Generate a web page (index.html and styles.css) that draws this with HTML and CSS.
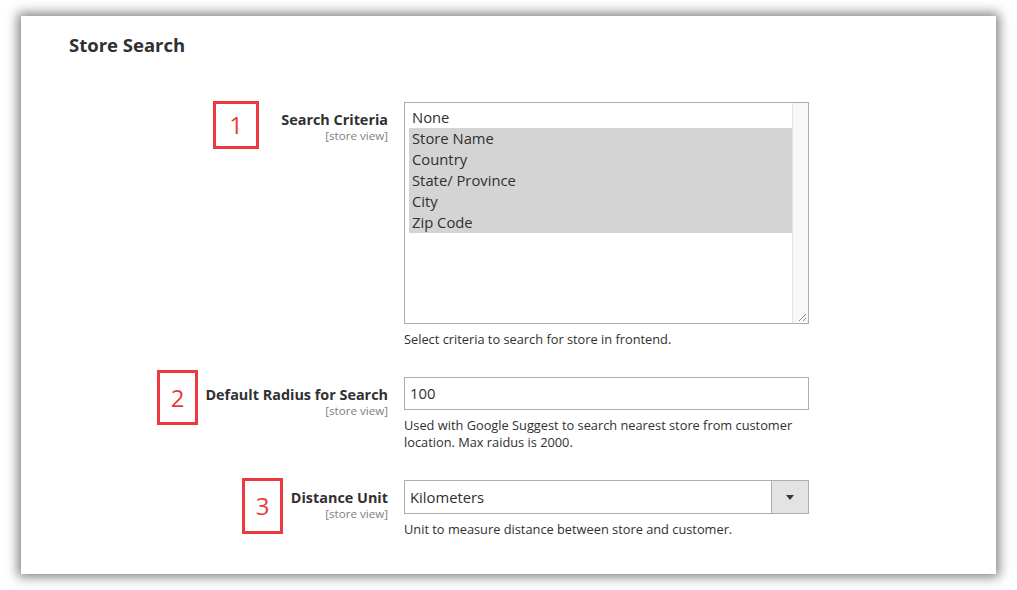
FILE: index.html
```html
<!DOCTYPE html>
<html lang="en">
<head>
<meta charset="utf-8">
<title>Store Search</title>
<link rel="stylesheet" href="styles.css">
</head>
<body>
<div class="card">
  <h2 class="title">Store Search</h2>

  <div class="row">
    <div class="label-cell">
      <span class="marker marker-1">1</span>
      <div class="label">Search Criteria</div>
      <div class="scope">[store view]</div>
    </div>
    <div class="control-cell">
      <div class="multiselect">
        <div class="options">
          <div class="option">None</div>
          <div class="option selected">Store Name</div>
          <div class="option selected">Country</div>
          <div class="option selected">State/ Province</div>
          <div class="option selected">City</div>
          <div class="option selected">Zip Code</div>
        </div>
        <div class="track"></div>
        <svg class="grip" width="10" height="10" viewBox="0 0 10 10">
          <path d="M2 9 L9 2 M6 9 L9 6" stroke="#8a8a8a" stroke-width="1" fill="none"/>
        </svg>
      </div>
      <div class="note">Select criteria to search for store in frontend.</div>
    </div>
  </div>

  <div class="row">
    <div class="label-cell">
      <span class="marker marker-2">2</span>
      <div class="label">Default Radius for Search</div>
      <div class="scope">[store view]</div>
    </div>
    <div class="control-cell">
      <div class="input">100</div>
      <div class="note">Used with Google Suggest to search nearest store from customer location. Max raidus is 2000.</div>
    </div>
  </div>

  <div class="row">
    <div class="label-cell">
      <span class="marker marker-3">3</span>
      <div class="label">Distance Unit</div>
      <div class="scope">[store view]</div>
    </div>
    <div class="control-cell">
      <div class="select">
        <span class="select-value">Kilometers</span>
        <span class="select-btn"><span class="caret"></span></span>
      </div>
      <div class="note">Unit to measure distance between store and customer.</div>
    </div>
  </div>
</div>
</body>
</html>
```

FILE: styles.css
```css
* { box-sizing: border-box; }

html, body {
  margin: 0;
  padding: 0;
  background: #ffffff;
}

body {
  font-family: "Open Sans", "Liberation Sans", sans-serif;
  color: #303030;
  padding: 16px 21px 16px 21px;
}

.card {
  width: 975px;
  height: 558px;
  background: #ffffff;
  box-shadow: 0 0 11px 3px rgba(0, 0, 0, 0.5);
  padding-top: 17px;
}

.title {
  margin: 0;
  padding-left: 48px;
  font-size: 18.5px;
  line-height: 24px;
  font-weight: 700;
  color: #303030;
}

.row {
  position: relative;
  display: grid;
  grid-template-columns: 367px 405px;
  column-gap: 16px;
  margin-top: 29px;
}

.row:first-of-type { margin-top: 45px; }

.label-cell {
  text-align: right;
  padding-top: 8px;
}

.label {
  font-size: 14.4px;
  line-height: 19px;
  font-weight: 700;
  color: #303030;
}

.scope {
  font-size: 11.6px;
  line-height: 14px;
  color: #808080;
}

.marker {
  position: absolute;
  display: flex;
  align-items: center;
  justify-content: center;
  border: 3px solid #ea3a3f;
  color: #ea3a3f;
  font-size: 24px;
  line-height: 1;
  font-weight: 400;
}

.marker-1 { left: 192px; top: -1px; width: 46px; height: 48px; }
.marker-2 { left: 136px; top: -7px; width: 41px; height: 55px; }
.marker-3 { left: 221px; top: -2px; width: 41px; height: 56px; }

.control-cell { display: flex; flex-direction: column; }

.multiselect {
  position: relative;
  height: 222px;
  border: 1px solid #adadad;
  display: flex;
  background: #fff;
}

.options {
  flex: 1;
  padding: 4px 0 0 4px;
}

.option {
  font-size: 14.8px;
  line-height: 21px;
  padding-left: 3px;
  color: #303030;
}

.option.selected { background: #d4d4d4; }

.track {
  width: 16px;
  background: #f8f8f8;
  border-left: 1px solid #e4e4e4;
}

.grip {
  position: absolute;
  right: 1px;
  bottom: 1px;
}

.note {
  margin-top: 7px;
  font-size: 12.8px;
  line-height: 17px;
  color: #303030;
}

.input {
  height: 33px;
  border: 1px solid #adadad;
  padding: 0 5px;
  font-size: 14.8px;
  line-height: 31px;
  color: #303030;
}

.select {
  display: flex;
  height: 34px;
  border: 1px solid #adadad;
}

.select-value {
  flex: 1;
  padding-left: 5px;
  font-size: 14.8px;
  line-height: 32px;
}

.select-btn {
  width: 37px;
  background: #e3e3e3;
  border-left: 1px solid #adadad;
  display: flex;
  align-items: center;
  justify-content: center;
}

.caret {
  width: 0;
  height: 0;
  border-left: 4px solid transparent;
  border-right: 4px solid transparent;
  border-top: 5px solid #41362f;
}
```
